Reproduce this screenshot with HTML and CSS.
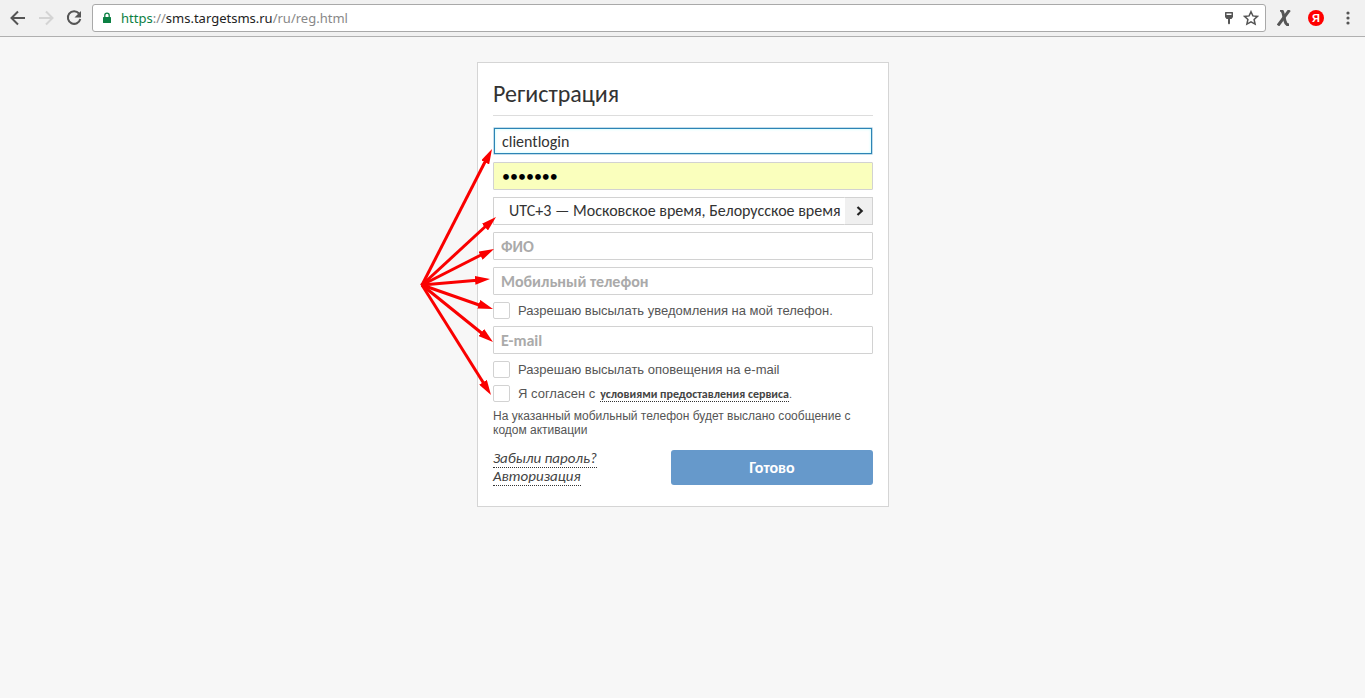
FILE: index.html
```html
<!DOCTYPE html>
<html lang="ru">
<head>
<meta charset="utf-8">
<title>Регистрация</title>
<link rel="stylesheet" href="styles.css">
</head>
<body>
<header class="toolbar">
  <button class="tool back" aria-label="Назад"><svg width="16" height="16" viewBox="0 0 16 16"><path d="M15 8H2M8 1.500 1.500 8 8 14.500"/></svg></button>
  <button class="tool forward" aria-label="Вперёд" disabled><svg width="16" height="16" viewBox="0 0 16 16"><path d="M1 8h13M8 1.500 14.500 8 8 14.500"/></svg></button>
  <button class="tool reload" aria-label="Обновить"><svg width="16" height="16" viewBox="0 0 16 16"><path d="M13 3.500A6.300 6.300 0 1 0 14.300 9"/><path class="solid" d="M15 1v6.500H8.500z"/></svg></button>
  <div class="address">
    <svg class="lock" width="8" height="12" viewBox="0 0 8 12"><path d="M.5 5h7q.5 0 .5.500v5q0 .5-.5.500h-7q-.5 0-.5-.5v-5Q0 5 .5 5z" fill="#0b8043"/><path d="M1.800 5.500V3.300a2.200 2.200 0 0 1 4.400 0v2.200" fill="none" stroke="#0b8043" stroke-width="1.300"/></svg>
    <span class="url"><span class="scheme">https</span>://<span class="host">sms.targetsms.ru</span>/ru/reg.html</span>
    <button class="tool" aria-label="Пароли"><svg width="10" height="14" viewBox="0 0 10 14"><path class="solid" fill-rule="evenodd" d="M1.500 1h7l.5.500V6L7.500 8H6v4.500L5 13.500 4 12.500V8H2.500L1 6V1.500zM2.500 2.500V4h5V2.500z"/></svg></button>
    <button class="tool" aria-label="В закладки"><svg class="star" width="16" height="16" viewBox="0 0 16 16"><path d="m8 1.700 1.900 4.200 4.600.5-3.400 3.100 1 4.600L8 11.800 3.900 14.100l1-4.600L1.500 6.400l4.600-.5z"/></svg></button>
  </div>
  <button class="tool ext-x" aria-label="X"><svg width="14" height="16" viewBox="0 0 14 16"><path d="M3 0C5 0 5.500 1 6 3l2 8c.5 2.500 1.500 4 4 4"/><path d="M12.500 0 1 15.500"/></svg></button>
  <button class="tool yandex" aria-label="Яндекс">Я</button>
  <button class="tool menu" aria-label="Меню"><svg width="4" height="14" viewBox="0 0 4 14"><g class="solid"><circle cx="2" cy="2" r="1.600"/><circle cx="2" cy="7" r="1.600"/><circle cx="2" cy="12" r="1.600"/></g></svg></button>
</header>
<main class="page">
  <form class="card">
    <h1 class="title">Регистрация</h1>
    <div class="fields">
      <input class="field active" type="text" value="clientlogin" aria-label="Логин">
      <input class="field filled" type="password" value="passwor" aria-label="Пароль">
      <div class="zone">
        <select class="field" aria-label="Часовой пояс"><option>UTC+3 — Московское время, Белорусское время</option></select>
        <span class="more"><svg width="8" height="10" viewBox="0 0 8 10"><path d="m1.500 1 4.200 4-4.200 4" fill="none" stroke="#222" stroke-width="2.200"/></svg></span>
      </div>
      <input class="field" type="text" placeholder="ФИО" aria-label="ФИО">
      <input class="field" type="tel" placeholder="Мобильный телефон" aria-label="Мобильный телефон">
      <label class="check"><input type="checkbox">Разрешаю высылать уведомления на мой телефон.</label>
      <input class="field" type="email" placeholder="E-mail" aria-label="E-mail">
      <label class="check"><input type="checkbox">Разрешаю высылать оповещения на e-mail</label>
      <div class="check"><input id="agree" type="checkbox"><label for="agree">Я согласен с</label><span class="terms"><a class="dotted" href="#terms">условиями предоставления сервиса</a>.</span></div>
    </div>
    <p class="note">На указанный мобильный телефон будет выслано сообщение с кодом активации</p>
    <div class="actions">
      <nav class="links"><a class="dotted" href="#forgot">Забыли пароль?</a><a class="dotted" href="#login">Авторизация</a></nav>
      <button class="submit" type="submit">Готово</button>
    </div>
    <svg class="arrows" width="80" height="260" viewBox="418 143 80 260" aria-hidden="true">
      <defs><marker id="head" viewBox="0 0 15 9" refX="15" refY="4.500" markerWidth="15" markerHeight="9" markerUnits="userSpaceOnUse" orient="auto"><path d="M0 0 15 4.500 0 9z" fill="#fa0000"/></marker></defs>
      <path d="m420 284 6-2 1 6-3 1z" fill="#fa0000"/>
      <g stroke="#fa0000" stroke-width="3" fill="none">
        <path d="M422 285 487 158"/><path d="M422 285 487 225"/><path d="M422 285 483 254"/><path d="M422 285 480 280"/><path d="M422 285 482 306"/><path d="M422 285 484 335"/><path d="M422 285 486 387"/>
      </g>
      <g stroke="none" fill="none">
        <path d="M422 285 492 149" marker-end="url(#head)"/><path d="M422 285 496 217" marker-end="url(#head)"/><path d="M422 285 494 249" marker-end="url(#head)"/><path d="M422 285 490 279" marker-end="url(#head)"/><path d="M422 285 493 309" marker-end="url(#head)"/><path d="M422 285 493 342" marker-end="url(#head)"/><path d="M422 285 491 395" marker-end="url(#head)"/>
      </g>
    </svg>
  </form>
</main>
</body>
</html>
```

FILE: styles.css
```css
* { box-sizing: border-box; }
body {
  margin: 0;
  min-height: 100vh;
  background: #f7f7f7;
  color: #555;
  font-family: "Liberation Sans", Arial, sans-serif;
}
button, input, select { font: inherit; }

.toolbar {
  display: flex;
  align-items: center;
  height: 37px;
  padding: 0 12px 0 10px;
  background: #f1f1f1;
  border-bottom: 1px solid #b0b0b0;
}
.tool {
  display: flex;
  align-items: center;
  justify-content: center;
  flex: none;
  padding: 0;
  border: 0;
  background: none;
  color: #555;
}
.tool svg { fill: none; stroke: currentColor; stroke-width: 2; }
.tool .solid { fill: currentColor; stroke: none; }
.back, .forward, .reload { width: 16px; margin-right: 12px; }
.forward { color: #d4d4d4; }
.reload { margin-right: 10px; }
.address {
  display: flex;
  align-items: center;
  flex: 1;
  gap: 10px;
  height: 28px;
  padding: 0 6px 0 10px;
  background: #fff;
  border: 1px solid #a9a9a9;
  border-radius: 3px;
}
.address .tool + .tool { margin-left: -1px; }
.url {
  flex: 1;
  color: #888;
  font: 13px/20px "Noto Sans", sans-serif;
}
.lock { flex: none; }
.scheme { color: #0b8043; }
.host { color: #222; }
.tool .star { stroke-width: 1.5; }
.ext-x { margin-left: 11px; }
.ext-x svg { stroke-width: 3; }
.yandex {
  width: 16px;
  height: 16px;
  margin: 0 22px 0 17px;
  border-radius: 50%;
  background: #f00;
  color: #fff;
  font-size: 11px;
  font-weight: bold;
}
.menu { margin-right: 3px; }

.page {
  display: flex;
  justify-content: center;
  padding: 25px 0 25px 1px;
}
.card {
  position: relative;
  width: 412px;
  max-width: 100%;
  padding: 15px 15px 20px;
  background: #fff;
  border: 1px solid #d5d5d5;
}
.title {
  margin: 0 0 11px;
  padding-bottom: 6px;
  border-bottom: 1px solid #ddd;
  color: #333;
  font: 24px/31px Carlito, Lato, sans-serif;
}
.fields {
  display: flex;
  flex-direction: column;
  gap: 7px;
}
.field {
  display: block;
  width: 100%;
  height: 28px;
  padding: 0 7px;
  border: 1px solid #d2d2d2;
  border-radius: 1px;
  background: #fff;
  color: #333;
  font: 500 16px/20px Carlito, Lato, sans-serif;
  appearance: none;
  outline: 0;
}
.field::placeholder { color: #aaa; font-weight: bold; opacity: 1; }
.active {
  padding: 0 8px;
  border-color: #c4dcea;
  box-shadow: inset 0 0 0 1px #2c84b5, inset 0 0 3px 1px #bff;
}
.filled { padding: 0 8px; background: #faffbd; color: #000; }
.zone { display: flex; }
.zone .field {
  flex: 1;
  min-width: 0;
  padding: 0 0 0 15px;
  border-right: 0;
}
.more {
  display: flex;
  align-items: center;
  justify-content: center;
  width: 28px;
  padding-left: 2px;
  border: 1px solid #d2d2d2;
  border-left: 0;
  background: #f0f0f0;
}
.check {
  display: flex;
  align-items: center;
  height: 17px;
  font-size: 13px;
}
.check input {
  width: 17px;
  height: 17px;
  margin: 0 8px 0 0;
  border: 1px solid #d2d2d2;
  border-radius: 2px;
  background: #fff;
  appearance: none;
}
.terms {
  margin-left: 5px;
  font-size: 11px;
}
.dotted {
  border-bottom: 1px dotted #333;
  color: #444;
  text-decoration: none;
}
.terms .dotted { font: bold 12px/12px Carlito, Lato, sans-serif; }
.note {
  margin: 7px 0 13px;
  font-size: 12px;
  line-height: 14px;
}
.actions {
  display: flex;
  justify-content: space-between;
  align-items: flex-start;
}
.links {
  display: flex;
  flex-direction: column;
  align-items: flex-start;
}
.links .dotted { font: italic 500 15px/17px Carlito, Lato, sans-serif; }
.submit {
  width: 202px;
  height: 35px;
  border: 0;
  border-radius: 3px;
  background: #6699cb;
  color: #fff;
  font: bold 16px/20px Carlito, Lato, sans-serif;
}
.arrows {
  position: absolute;
  top: 80px;
  left: -60px;
  pointer-events: none;
}
```
